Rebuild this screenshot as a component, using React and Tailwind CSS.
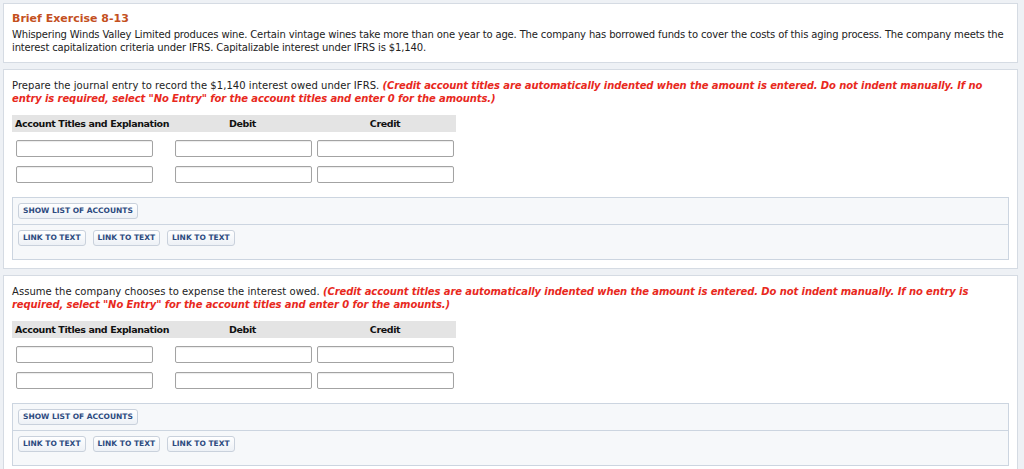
import React from "react";

const font = { fontFamily: '"DejaVu Sans", Verdana, sans-serif' };

const note =
  '(Credit account titles are automatically indented when the amount is entered. Do not indent manually. If no entry is required, select "No Entry" for the account titles and enter 0 for the amounts.)';

function Field({ className }) {
  return (
    <input
      type="text"
      className={
        "block h-[17px] w-[137px] rounded-[2px] border border-[#a3a3a3] bg-white shadow-[inset_0_1px_1px_rgba(0,0,0,0.08)] outline-none " +
        className
      }
    />
  );
}

function ToolButton({ children }) {
  return (
    <button className="h-[16px] rounded-[3px] border border-[#c9d1dc] bg-gradient-to-b from-white to-[#edf1f6] px-[4px] text-[7.5px] font-bold leading-[14px] text-[#2d4b80]">
      {children}
    </button>
  );
}

function JournalEntry({ prompt }) {
  return (
    <div className="border border-[#d5dbe3] bg-white px-2 pt-[9px] pb-[8px]">
      <p className="text-[10px] leading-[13px] tracking-[0.05px] text-[#222]">
        {prompt}{" "}
        <span className="font-bold italic tracking-[-0.1px] text-[#e8291d]">
          {note}
        </span>
      </p>

      <div className="mt-[10px] w-[444px]">
        <div className="grid h-[17px] grid-cols-[159px_143px_142px] bg-[#e4e4e4] text-[9.5px] font-bold leading-[17px] tracking-[-0.4px] text-[#111]">
          <div className="whitespace-nowrap pl-[3px]">
            Account Titles and Explanation
          </div>
          <div className="text-center">Debit</div>
          <div className="text-center">Credit</div>
        </div>
        <div className="mt-[8px] flex flex-col gap-[9px]">
          {[0, 1].map((r) => (
            <div key={r} className="grid grid-cols-[159px_143px_142px]">
              <Field className="ml-[4px]" />
              <Field className="ml-[4px]" />
              <Field className="ml-[3px]" />
            </div>
          ))}
        </div>
      </div>

      <div className="mt-[14px] border border-[#ccd5e0] bg-[#f6f8fa]">
        <div className="flex px-[5px] pt-[5px] pb-[5px]">
          <ToolButton>SHOW LIST OF ACCOUNTS</ToolButton>
        </div>
        <div className="flex gap-[7px] border-t border-[#ccd5e0] px-[5px] pt-[5px] pb-[13px]">
          <ToolButton>LINK TO TEXT</ToolButton>
          <ToolButton>LINK TO TEXT</ToolButton>
          <ToolButton>LINK TO TEXT</ToolButton>
        </div>
      </div>
    </div>
  );
}

export default function App() {
  return (
    <div
      className="flex min-h-screen flex-col gap-[6px] bg-[#eef1f5] pt-[3px] pl-[3px] pr-[6px]"
      style={font}
    >
      <div className="border border-[#d5dbe3] bg-white px-2 pt-2 pb-[8px]">
        <h1 className="text-[11px] font-bold leading-[14px] text-[#c4501e]">
          Brief Exercise 8-13
        </h1>
        <p className="mt-[3px] text-[10px] leading-[12.5px] tracking-[-0.15px] text-[#222]">
          Whispering Winds Valley Limited produces wine. Certain vintage wines
          take more than one year to age. The company has borrowed funds to
          cover the costs of this aging process. The company meets the interest
          capitalization criteria under IFRS. Capitalizable interest under IFRS
          is $1,140.
        </p>
      </div>

      <JournalEntry prompt="Prepare the journal entry to record the $1,140 interest owed under IFRS." />
      <JournalEntry prompt="Assume the company chooses to expense the interest owed." />
    </div>
  );
}
